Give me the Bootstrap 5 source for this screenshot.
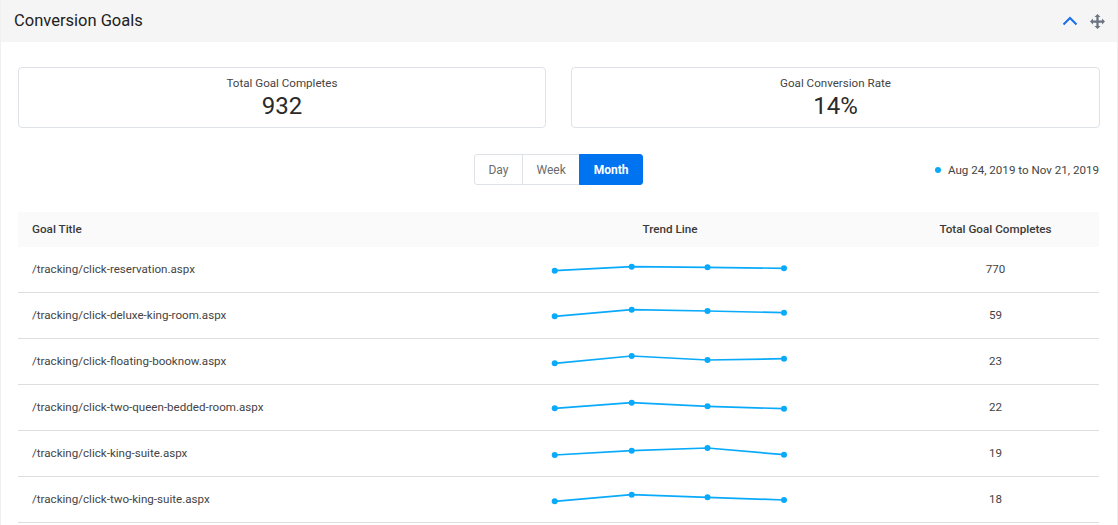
<!DOCTYPE html>
<html lang="en">
<head>
  <meta charset="UTF-8" />
  <meta name="viewport" content="width=device-width, initial-scale=1.0" />
  <title>Conversion Goals</title>
  <link href="https://cdn.jsdelivr.net/npm/bootstrap@5.3.3/dist/css/bootstrap.min.css" rel="stylesheet">
  <style>
    /* page and panel */
    html, body { height: 525px; overflow: hidden; }
    body { background: #f0f0f0; font-family: Roboto, "Liberation Sans", sans-serif; color: #333; font-size: 11.6px; }
    .goal-panel { margin: 0 1px; background: #fff; border: 0; border-radius: 0; height: 525px; }
    .goal-head { height: 42px; padding: 0 12px 0 13px; background: #f5f5f5; border: 0; border-radius: 0 !important; }
    .goal-title { font-size: 16.5px; font-weight: 400; color: #212121; }
    .goal-body { padding: 25px 18px 0 17px; }

    /* stat boxes */
    .stat-row { gap: 25px; margin-right: -1px; }
    .stat-box { flex: 1 1 0; height: 61px; border: 1px solid #dee2e6; border-radius: 4px; padding-top: 8px; }
    .stat-box:first-child { flex: 0 0 528px; }
    .stat-label { font-size: 11.6px; line-height: 15px; color: #444; }
    .stat-num { font-size: 24px; line-height: 30px; color: #2a2a2a; }

    /* range toggle */
    .range-row { height: 31px; margin-top: 26px; position: relative; }
    .range-group .btn { font-size: 12px; line-height: 18px; padding: 6px 13.5px; color: #6c6c6c; border-color: #dee2e6; background: #fff; border-radius: 3px; }
    .range-group .btn.active { background: #0073f0; border-color: #0073f0; color: #fff; font-weight: 700; }
    .range-date { position: absolute; right: 0; top: 9px; line-height: 15px; color: #444; }
    .range-dot { display: inline-block; width: 6px; height: 6px; border-radius: 50%; background: #0aaafa; margin-right: 7px; vertical-align: 1px; }

    /* goals table */
    .goal-table { margin: 27px 0 0; table-layout: fixed; width: 1081px; }
    .goal-table th { height: 35px; padding: 0 14px; background: #fafafa; border: 0; font-size: 11.7px; font-weight: 500; color: #3a3a3a; vertical-align: middle; }
    .goal-table td { height: 46px; padding: 1px 14px 0; border-bottom: 1px solid #dedede; color: #444; vertical-align: middle; }
    .goal-table tbody tr:first-child td { height: 45px; padding-top: 0; }
    .goal-table td.spark-cell { padding: 0; }
    .spark { display: block; margin: 0 auto; }
    .spark polyline { fill: none; stroke: #0aaafa; stroke-width: 1.7; }
    .spark circle { fill: #0aaafa; }
  </style>
</head>
<body>
  <div class="card goal-panel">
    <div class="card-header goal-head d-flex align-items-center justify-content-between">
      <h5 class="goal-title mb-0">Conversion Goals</h5>
      <div class="d-flex align-items-center gap-2">
        <svg width="16" height="10" viewBox="0 0 16 10"><path d="M1.500 8.500 8 2l6.500 6.500" fill="none" stroke="#1a6fe8" stroke-width="2"/></svg>
        <svg class="ms-1" width="15" height="15" viewBox="0 0 16 16"><path fill="#6b7480" d="M8 0l3.200 3.200H9.200v3.600h3.600V4.800L16 8l-3.200 3.200V9.200H9.200v3.600h2L8 16l-3.200-3.200h2V9.200H3.200v2L0 8l3.200-3.200v2h3.600V3.200h-2z"/></svg>
      </div>
    </div>
    <div class="goal-body">
      <!-- totals -->
      <div class="d-flex stat-row">
        <div class="stat-box text-center">
          <div class="stat-label">Total Goal Completes</div>
          <div class="stat-num">932</div>
        </div>
        <div class="stat-box text-center">
          <div class="stat-label">Goal Conversion Rate</div>
          <div class="stat-num">14%</div>
        </div>
      </div>

      <!-- range -->
      <div class="range-row d-flex justify-content-center">
        <div class="btn-group range-group" role="group">
          <button type="button" class="btn">Day</button>
          <button type="button" class="btn">Week</button>
          <button type="button" class="btn active">Month</button>
        </div>
        <div class="range-date"><span class="range-dot"></span>Aug 24, 2019 to Nov 21, 2019</div>
      </div>

      <!-- table -->
      <table class="table goal-table">
        <colgroup><col style="width:430px"><col style="width:444px"><col style="width:207px"></colgroup>
        <thead>
          <tr><th>Goal Title</th><th class="text-center">Trend Line</th><th class="text-center">Total Goal Completes</th></tr>
        </thead>
        <tbody id="goalRows"></tbody>
      </table>
    </div>
  </div>

  <script>
    // goal rows, y values are the point heights inside the row
    var goals = [
      ['/tracking/click-reservation.aspx', 770, [23.7, 19.7, 20.3, 21.3]],
      ['/tracking/click-deluxe-king-room.aspx', 59, [23.3, 16.7, 18, 19.7]],
      ['/tracking/click-floating-booknow.aspx', 23, [24.3, 17, 21, 19.7]],
      ['/tracking/click-two-queen-bedded-room.aspx', 22, [23.3, 17.7, 21.3, 23.7]],
      ['/tracking/click-king-suite.aspx', 19, [24, 19.7, 17, 23.7]],
      ['/tracking/click-two-king-suite.aspx', 18, [24.3, 17.7, 20.3, 23]]
    ];
    var xs = [4.7, 81.7, 157.5, 234];
    var html = '';
    goals.forEach(function (g, n) {
      var line = g[2].map(function (y, i) { return xs[i] + ',' + y; }).join(' ');
      var dots = g[2].map(function (y, i) { return '<circle cx="' + xs[i] + '" cy="' + y + '" r="3"></circle>'; }).join('');
      html += '<tr><td>' + g[0] + '</td><td class="spark-cell"><svg class="spark" width="240" height="' + (n ? 45 : 44) + '"><polyline points="' + line + '"></polyline>' + dots + '</svg></td><td class="text-center">' + g[1] + '</td></tr>';
    });
    document.getElementById('goalRows').innerHTML = html;
  </script>
  <script src="https://cdn.jsdelivr.net/npm/bootstrap@5.3.3/dist/js/bootstrap.bundle.min.js"></script>
</body>
</html>
